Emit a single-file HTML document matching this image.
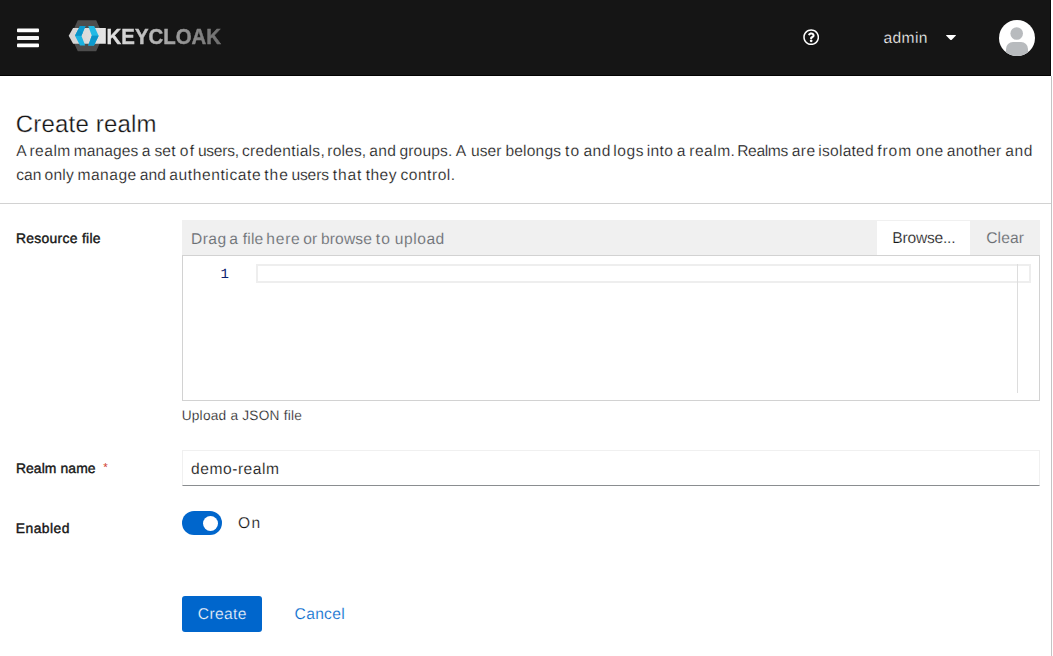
<!DOCTYPE html>
<html lang="en">
<head>
<meta charset="utf-8">
<title>Keycloak Administration Console</title>
<style>
  html, body { margin: 0; padding: 0; }
  body {
    width: 1053px; height: 656px; overflow: hidden; position: relative;
    background: #ffffff;
    font-family: "Liberation Sans", sans-serif;
    color: #151515;
  }
  .abs { position: absolute; white-space: nowrap; }
  .t { position: absolute; white-space: nowrap; line-height: 1; display: inline-block; transform-origin: 0 0; text-rendering: geometricPrecision; }

  /* masthead */
  #masthead { position: absolute; left: 0; top: 0; width: 1051px; height: 76px; background: #151515; box-sizing: border-box; border-bottom: 1px solid #030303; border-right: 1px solid #0a0a0a; }
  #edge { position: absolute; left: 1051px; top: 76px; width: 1px; height: 580px; background: #c4c4c4; }

  #divider { position: absolute; left: 0; top: 203px; width: 1051px; height: 1px; background: #d2d2d2; }

  /* file upload */
  #filebar { position: absolute; left: 182px; top: 220px; width: 858px; height: 36px; background: #f0f0f0; }
  #browse { position: absolute; left: 877px; top: 221px; width: 93px; height: 35px; background: #ffffff; }
  #editor { position: absolute; left: 182px; top: 255px; width: 858px; height: 146px; box-sizing: border-box; border: 1px solid #d2d2d2; background: #fff; }
  #curline { position: absolute; left: 256px; top: 264px; width: 775px; height: 19px; box-sizing: border-box; border: 2px solid #eeeeee; }
  #ruler { position: absolute; left: 1017px; top: 264px; width: 1px; height: 129px; background: #dddddd; }

  /* realm name input */
  #realm { position: absolute; left: 182px; top: 450px; width: 858px; height: 36px; box-sizing: border-box; border: 1px solid #f0f0f0; border-bottom: 1px solid #8a8d90; background: #fff; }

  /* switch */
  #switch { position: absolute; left: 182px; top: 511px; width: 40px; height: 24px; border-radius: 12px; background: #0066cc; }
  #knob { position: absolute; left: 202.5px; top: 515.5px; width: 15px; height: 15px; border-radius: 7.5px; background: #ffffff; }

  /* buttons */
  #create { position: absolute; left: 182px; top: 596px; width: 80px; height: 36px; border-radius: 3px; background: #0066cc; }
</style>
</head>
<body>

<div id="edge"></div>

<header role="banner">
<div id="masthead"></div>

<!-- hamburger -->
<svg class="abs" style="left:0;top:0" width="60" height="76" viewBox="0 0 60 76">
  <rect x="17" y="28.6" width="22" height="3.6" rx="0.9" fill="#ffffff"/>
  <rect x="17" y="36.05" width="22" height="3.95" rx="0.9" fill="#f4f4f4"/>
  <rect x="17" y="43.6" width="22" height="3.65" rx="0.9" fill="#ffffff"/>
</svg>

<!-- keycloak logo -->
<svg class="abs" style="left:60px;top:10px;opacity:0.999;will-change:opacity" width="170" height="56" viewBox="60 10 170 56">
  <defs>
    <linearGradient id="kcband" x1="0" y1="0" x2="1" y2="0">
      <stop offset="0" stop-color="#d4d4d4"/>
      <stop offset="1" stop-color="#e6e6e6"/>
    </linearGradient>
    <linearGradient id="kctext" gradientUnits="userSpaceOnUse" x1="106" y1="0" x2="222" y2="0">
      <stop offset="0" stop-color="#e8e8e8"/>
      <stop offset="0.45" stop-color="#b0b0b0"/>
      <stop offset="1" stop-color="#6c6c6c"/>
    </linearGradient>
  </defs>
  <!-- hexagon -->
  <polygon points="77.8,20.2 96.2,20.2 103.2,35.7 96.2,51.2 77.8,51.2 70.6,35.7" fill="#4e4e4e"/>
  <!-- band -->
  <polygon points="68.7,35.8 73.1,27.9 105.8,27.9 105.8,43.8 73.1,43.8" fill="url(#kcband)"/>
  <!-- chevrons -->
  <polygon points="80,26 85.5,26 81.4,35.8 85.2,45.6 80,45.6 75,35.8" fill="#1cb4e2"/>
  <polygon points="80,26 85.5,26 81.4,35.8 75,35.8" fill="#0d9bd0"/>
  <polygon points="78.2,29.6 82.6,33 81.4,35.8 75,35.8" fill="#0a8fc4" opacity="0.6"/>
  <polygon points="88.2,26 94.2,26 98.6,35.8 94,45.6 88.2,45.6 91.8,35.8" fill="#22bbe6"/>
  <polygon points="91.8,35.8 98.6,35.8 94,45.6 88.2,45.6" fill="#0d9bd0"/>
  <polygon points="91.8,35.8 98.6,35.8 96.6,40 90.4,39.6" fill="#0a8fc4" opacity="0.5"/>
  <text id="kcword" x="106.6" y="43.5" font-family="Liberation Sans, sans-serif" font-weight="bold" font-size="21.3" fill="url(#kctext)" stroke="url(#kctext)" stroke-width="0.45" textLength="114.5" lengthAdjust="spacingAndGlyphs">KEYCLOAK</text>
</svg>

<!-- help icon -->
<svg class="abs" style="left:802.8px;top:28.9px" width="16.4" height="16.4" viewBox="0 0 512 512">
  <path fill="#ffffff" d="M256 8C119.043 8 8 119.083 8 256c0 136.997 111.043 248 248 248s248-111.003 248-248C504 119.083 392.957 8 256 8zm0 448c-110.532 0-200-89.431-200-200 0-110.495 89.472-200 200-200 110.491 0 200 89.471 200 200 0 110.53-89.431 200-200 200zm107.244-255.2c0 67.052-72.421 68.084-72.421 92.863V300c0 6.627-5.373 12-12 12h-45.647c-6.627 0-12-5.373-12-12v-8.659c0-35.745 27.1-50.034 47.579-61.516 17.561-9.845 28.324-16.541 28.324-29.579 0-17.246-21.999-28.693-39.784-28.693-23.189 0-33.894 10.977-48.942 29.969-4.057 5.12-11.46 6.071-16.666 2.124l-27.824-21.098c-5.107-3.872-6.251-11.066-2.644-16.363C184.846 131.491 214.94 112 261.794 112c49.071 0 101.45 38.304 101.45 88.8zM298 368c0 23.159-18.841 42-42 42s-42-18.841-42-42 18.841-42 42-42 42 18.841 42 42z"/>
</svg>

<span class="t" id="admin" style="left:883.51px;top:31.10px;font-size:15.6px;color:#ffffff;letter-spacing:0.349px;-webkit-text-stroke:0.28px #151515;">admin</span>

<!-- caret -->
<svg class="abs" style="left:940px;top:30px" width="22" height="16" viewBox="940 30 22 16">
  <path d="M946.6 35 L955.4 35 Q956.4 35 955.7 35.8 L951.5 39.9 Q951 40.3 950.5 39.9 L946.3 35.8 Q945.6 35 946.6 35 Z" fill="#ffffff"/>
</svg>

<!-- avatar -->
<svg class="abs" style="left:996px;top:16px" width="44" height="44" viewBox="996 16 44 44">
  <defs><clipPath id="avclip"><circle cx="1017" cy="38" r="18"/></clipPath></defs>
  <circle cx="1017" cy="38" r="18" fill="#ffffff"/>
  <g clip-path="url(#avclip)">
    <circle cx="1016.7" cy="33.5" r="6.3" fill="#b8bbbe"/>
    <rect x="1006" y="41.9" width="22" height="22" rx="7" fill="#b8bbbe"/>
  </g>
</svg>

</header>

<main role="main">
<!-- page heading -->
<span class="t" id="title" style="left:15.87px;top:113.40px;font-size:24px;color:#151515;letter-spacing:0.179px;-webkit-text-stroke:0.3px #ffffff;">Create realm</span>
<span class="t" id="desc1_w0" style="left:16.18px;top:144.34px;font-size:15.6px;color:#151515;letter-spacing:0.044px;-webkit-text-stroke:0.2px #ffffff;">A</span>
<span class="t" id="desc1_w1" style="left:29.46px;top:144.34px;font-size:15.6px;color:#151515;letter-spacing:0.47px;-webkit-text-stroke:0.2px #ffffff;">realm</span>
<span class="t" id="desc1_w2" style="left:73.72px;top:144.46px;font-size:15.6px;color:#151515;letter-spacing:0.071px;-webkit-text-stroke:0.2px #ffffff;">manages</span>
<span class="t" id="desc1_w3" style="left:141.83px;top:144.34px;font-size:15.6px;color:#151515;letter-spacing:0.044px;-webkit-text-stroke:0.2px #ffffff;">a</span>
<span class="t" id="desc1_w4" style="left:154.45px;top:144.40px;font-size:15.6px;color:#151515;letter-spacing:0.111px;-webkit-text-stroke:0.2px #ffffff;">set</span>
<span class="t" id="desc1_w5" style="left:179.85px;top:144.40px;font-size:15.6px;color:#151515;letter-spacing:1.200px;-webkit-text-stroke:0.2px #ffffff;">of</span>
<span class="t" id="desc1_w6" style="left:197.90px;top:144.34px;font-size:15.6px;color:#151515;letter-spacing:-0.263px;-webkit-text-stroke:0.2px #ffffff;">users,</span>
<span class="t" id="desc1_w7" style="left:241.91px;top:144.34px;font-size:15.6px;color:#151515;letter-spacing:0.283px;-webkit-text-stroke:0.2px #ffffff;">credentials,</span>
<span class="t" id="desc1_w8" style="left:327.33px;top:144.34px;font-size:15.6px;color:#151515;letter-spacing:0.144px;-webkit-text-stroke:0.2px #ffffff;">roles,</span>
<span class="t" id="desc1_w9" style="left:369.22px;top:144.40px;font-size:15.6px;color:#151515;letter-spacing:0.310px;-webkit-text-stroke:0.2px #ffffff;">and</span>
<span class="t" id="desc1_w10" style="left:399.38px;top:144.34px;font-size:15.6px;color:#151515;letter-spacing:0.156px;-webkit-text-stroke:0.2px #ffffff;">groups.</span>
<span class="t" id="desc1_w11" style="left:455.80px;top:144.40px;font-size:15.6px;color:#151515;letter-spacing:0.044px;-webkit-text-stroke:0.2px #ffffff;">A</span>
<span class="t" id="desc1_w12" style="left:470.95px;top:144.34px;font-size:15.6px;color:#151515;letter-spacing:0.086px;-webkit-text-stroke:0.2px #ffffff;">user</span>
<span class="t" id="desc1_w13" style="left:505.40px;top:144.34px;font-size:15.6px;color:#151515;letter-spacing:0.184px;-webkit-text-stroke:0.2px #ffffff;">belongs</span>
<span class="t" id="desc1_w14" style="left:565.02px;top:144.34px;font-size:15.6px;color:#151515;letter-spacing:1.200px;-webkit-text-stroke:0.2px #ffffff;">to</span>
<span class="t" id="desc1_w15" style="left:583.52px;top:144.34px;font-size:15.6px;color:#151515;letter-spacing:0.402px;-webkit-text-stroke:0.2px #ffffff;">and</span>
<span class="t" id="desc1_w16" style="left:613.33px;top:144.34px;font-size:15.6px;color:#151515;letter-spacing:0.517px;-webkit-text-stroke:0.2px #ffffff;">logs</span>
<span class="t" id="desc1_w17" style="left:646.79px;top:144.46px;font-size:15.6px;color:#151515;letter-spacing:0.331px;-webkit-text-stroke:0.2px #ffffff;">into</span>
<span class="t" id="desc1_w18" style="left:676.69px;top:144.40px;font-size:15.6px;color:#151515;letter-spacing:0.044px;-webkit-text-stroke:0.2px #ffffff;">a</span>
<span class="t" id="desc1_w19" style="left:689.33px;top:144.34px;font-size:15.6px;color:#151515;letter-spacing:0.453px;-webkit-text-stroke:0.2px #ffffff;">realm.</span>
<span class="t" id="desc1_w20" style="left:737.20px;top:144.34px;font-size:15.6px;color:#151515;letter-spacing:-0.346px;-webkit-text-stroke:0.2px #ffffff;">Realms</span>
<span class="t" id="desc1_w21" style="left:791.83px;top:144.34px;font-size:15.6px;color:#151515;letter-spacing:0.364px;-webkit-text-stroke:0.2px #ffffff;">are</span>
<span class="t" id="desc1_w22" style="left:818.33px;top:144.34px;font-size:15.6px;color:#151515;letter-spacing:0.226px;-webkit-text-stroke:0.2px #ffffff;">isolated</span>
<span class="t" id="desc1_w23" style="left:877.25px;top:144.34px;font-size:15.6px;color:#151515;letter-spacing:0.9px;-webkit-text-stroke:0.2px #ffffff;">from</span>
<span class="t" id="desc1_w24" style="left:915.93px;top:144.34px;font-size:15.6px;color:#151515;letter-spacing:0.620px;-webkit-text-stroke:0.2px #ffffff;">one</span>
<span class="t" id="desc1_w25" style="left:946.69px;top:144.40px;font-size:15.6px;color:#151515;letter-spacing:0.282px;-webkit-text-stroke:0.2px #ffffff;">another</span>
<span class="t" id="desc1_w26" style="left:1005.25px;top:144.34px;font-size:15.6px;color:#151515;letter-spacing:0.559px;-webkit-text-stroke:0.2px #ffffff;">and</span>
<span class="t" id="desc2_w0" style="left:16.28px;top:167.92px;font-size:15.6px;color:#151515;letter-spacing:-0.032px;-webkit-text-stroke:0.2px #ffffff;">can</span>
<span class="t" id="desc2_w1" style="left:44.55px;top:168.04px;font-size:15.6px;color:#151515;letter-spacing:0.194px;-webkit-text-stroke:0.2px #ffffff;">only</span>
<span class="t" id="desc2_w2" style="left:77.42px;top:167.92px;font-size:15.6px;color:#151515;letter-spacing:0.500px;-webkit-text-stroke:0.2px #ffffff;">manage</span>
<span class="t" id="desc2_w3" style="left:139.74px;top:167.98px;font-size:15.6px;color:#151515;letter-spacing:0.111px;-webkit-text-stroke:0.2px #ffffff;">and</span>
<span class="t" id="desc2_w4" style="left:169.25px;top:167.92px;font-size:15.6px;color:#151515;letter-spacing:0.582px;-webkit-text-stroke:0.2px #ffffff;">authenticate</span>
<span class="t" id="desc2_w5" style="left:264.33px;top:167.98px;font-size:15.6px;color:#151515;letter-spacing:0.920px;-webkit-text-stroke:0.2px #ffffff;">the</span>
<span class="t" id="desc2_w6" style="left:291.40px;top:167.92px;font-size:15.6px;color:#151515;letter-spacing:-0.134px;-webkit-text-stroke:0.2px #ffffff;">users</span>
<span class="t" id="desc2_w7" style="left:332.87px;top:167.98px;font-size:15.6px;color:#151515;letter-spacing:0.855px;-webkit-text-stroke:0.2px #ffffff;">that</span>
<span class="t" id="desc2_w8" style="left:365.87px;top:167.98px;font-size:15.6px;color:#151515;letter-spacing:0.373px;-webkit-text-stroke:0.2px #ffffff;">they</span>
<span class="t" id="desc2_w9" style="left:400.40px;top:167.92px;font-size:15.6px;color:#151515;letter-spacing:0.514px;-webkit-text-stroke:0.2px #ffffff;">control.</span>

<div id="divider"></div>

<form>

<!-- Resource file -->
<span class="t" id="lbl1" style="left:15.98px;top:232.24px;font-size:13.9px;font-weight:normal;-webkit-text-stroke:0.38px #151515;color:#151515;letter-spacing:0.293px;">Resource file</span>
<div id="filebar"></div>
<div id="browse"></div>
<span class="t" id="drag_w0" style="left:190.93px;top:232.31px;font-size:15.6px;color:#6a6e73;letter-spacing:0.491px;-webkit-text-stroke:0.12px #f0f0f0;">Drag</span>
<span class="t" id="drag_w1" style="left:229.30px;top:232.19px;font-size:15.6px;color:#6a6e73;letter-spacing:0.161px;-webkit-text-stroke:0.12px #f0f0f0;">a</span>
<span class="t" id="drag_w2" style="left:242.64px;top:232.19px;font-size:15.6px;color:#6a6e73;letter-spacing:0.229px;-webkit-text-stroke:0.12px #f0f0f0;">file</span>
<span class="t" id="drag_w3" style="left:266.32px;top:232.19px;font-size:15.6px;color:#6a6e73;letter-spacing:0.751px;-webkit-text-stroke:0.12px #f0f0f0;">here</span>
<span class="t" id="drag_w4" style="left:303.35px;top:232.19px;font-size:15.6px;color:#6a6e73;letter-spacing:-0.103px;-webkit-text-stroke:0.12px #f0f0f0;">or</span>
<span class="t" id="drag_w5" style="left:320.90px;top:232.19px;font-size:15.6px;color:#6a6e73;letter-spacing:0.170px;-webkit-text-stroke:0.12px #f0f0f0;">browse</span>
<span class="t" id="drag_w6" style="left:375.78px;top:232.19px;font-size:15.6px;color:#6a6e73;letter-spacing:1.200px;-webkit-text-stroke:0.12px #f0f0f0;">to</span>
<span class="t" id="drag_w7" style="left:394.83px;top:232.31px;font-size:15.6px;color:#6a6e73;letter-spacing:0.524px;-webkit-text-stroke:0.12px #f0f0f0;">upload</span>
<span class="t" id="browsetxt" style="left:892.33px;top:230.50px;font-size:15.6px;color:#151515;letter-spacing:-0.219px;-webkit-text-stroke:0.2px #ffffff;">Browse...</span>
<span class="t" id="cleartxt" style="left:986.14px;top:230.52px;font-size:15.6px;color:#6a6e73;letter-spacing:0.146px;-webkit-text-stroke:0.12px #f0f0f0;">Clear</span>
<div id="editor"></div>
<div id="curline"></div>
<div id="ruler"></div>
<span class="t" id="lineno" style="left:220.52px;top:268.10px;font-size:14px;color:#0b216f;font-family:'Liberation Mono',monospace;letter-spacing:0.000px;">1</span>
<span class="t" id="helper" style="left:181.70px;top:408.98px;font-size:13.7px;color:#151515;letter-spacing:0.218px;-webkit-text-stroke:0.22px #ffffff;">Upload a JSON file</span>

<!-- Realm name -->
<span class="t" id="lbl2" style="left:15.88px;top:461.95px;font-size:13.9px;font-weight:normal;-webkit-text-stroke:0.38px #151515;color:#151515;letter-spacing:0.107px;">Realm name</span>
<span class="t" id="star" style="left:103.36px;top:463.40px;font-size:11.5px;color:#cf3a2e;letter-spacing:0.000px;">*</span>
<div id="realm"></div>
<span class="t" id="realmtxt" style="left:191.12px;top:462.17px;font-size:15.6px;color:#151515;letter-spacing:0.517px;-webkit-text-stroke:0.15px #ffffff;">demo-realm</span>

<!-- Enabled -->
<span class="t" id="lbl3" style="left:15.83px;top:522.12px;font-size:13.9px;font-weight:normal;-webkit-text-stroke:0.38px #151515;color:#151515;letter-spacing:0.438px;">Enabled</span>
<div id="switch"></div>
<div id="knob"></div>
<span class="t" id="ontxt" style="left:238.05px;top:516.47px;font-size:15.6px;color:#151515;letter-spacing:1.200px;-webkit-text-stroke:0.2px #ffffff;">On</span>

<!-- buttons -->
<div id="create"></div>
<span class="t" id="createtxt" style="left:197.81px;top:607.38px;font-size:15.6px;color:#ffffff;letter-spacing:0.346px;-webkit-text-stroke:0.28px #0066cc;">Create</span>
<span class="t" id="canceltxt" style="left:294.60px;top:607.06px;font-size:15.6px;color:#0066cc;letter-spacing:0.304px;-webkit-text-stroke:0.2px #ffffff;">Cancel</span>

</form>
</main>

</body>
</html>
